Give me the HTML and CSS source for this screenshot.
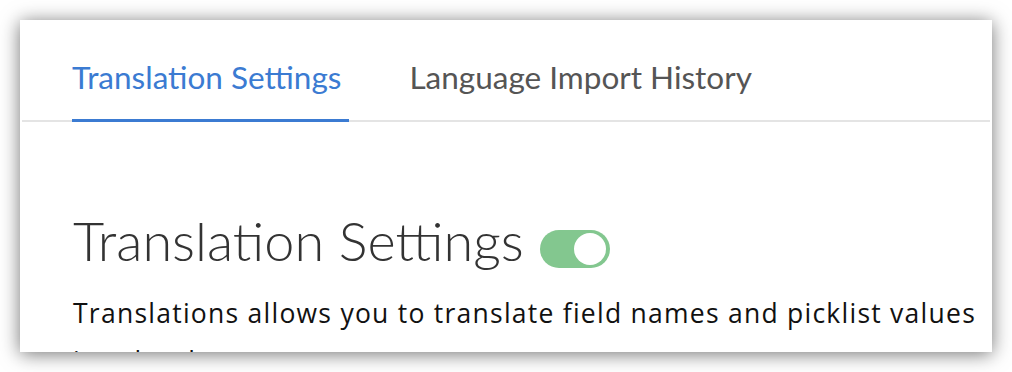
FILE: index.html
```html
<!DOCTYPE html>
<html lang="en">
<head>
    <meta charset="UTF-8">
    <title>Translation Settings</title>
    <link rel="stylesheet" href="styles.css">
</head>
<body>
    <div class="page">
        <div class="card">
            <!-- Tabs -->
            <div class="tabs">
                <div class="tab active">Translation Settings</div>
                <div class="tab">Language Import History</div>
            </div>

            <!-- Settings Section -->
            <div class="settings">
                <div class="settings-title">
                    <h1>Translation Settings</h1>
                    <span class="toggle on"><span class="knob"></span></span>
                </div>
                <p>Translations allows you to translate field names and picklist values in other languages.</p>
            </div>
        </div>
    </div>
</body>
</html>
```

FILE: styles.css
```css
body {
    margin: 0;
    background: #fff;
    font-family: 'Lato', 'Liberation Sans', sans-serif;
}

.page {
    padding: 20px;
}

.card {
    width: 972px;
    height: 332px;
    background: #fff;
    overflow: hidden;
    box-shadow: 0 2px 18px rgba(0, 0, 0, 0.55);
}

.tabs {
    display: flex;
    gap: 60px;
    margin: 0 2px;
    padding-left: 50px;
    border-bottom: 2px solid #e4e4e4;
}

.tab {
    font-size: 31.5px;
    line-height: 1.2;
    color: #555;
    padding: 39px 8px 22px 0;
    border-bottom: 3px solid transparent;
    margin-bottom: -2px;
}

.tab.active {
    color: #3b7bd2;
    border-bottom-color: #3b7bd2;
}

.settings {
    padding-left: 53px;
}

.settings-title {
    display: flex;
    align-items: center;
    gap: 16px;
    margin-top: 87px;
}

.settings-title h1 {
    margin: 0;
    font-size: 54px;
    font-weight: 300;
    line-height: 1.2;
    color: #333;
}

.toggle {
    width: 70px;
    height: 38px;
    border-radius: 19px;
    background: #83c78f;
    margin-top: 16px;
    position: relative;
}

.toggle .knob {
    position: absolute;
    top: 3px;
    right: 4px;
    width: 32px;
    height: 32px;
    border-radius: 50%;
    background: #fff;
}

.settings p {
    margin: 15px 0 0;
    font-family: 'Open Sans', 'Liberation Sans', sans-serif;
    font-size: 26.5px;
    letter-spacing: 1.25px;
    line-height: 48px;
    color: #111;
}
```
